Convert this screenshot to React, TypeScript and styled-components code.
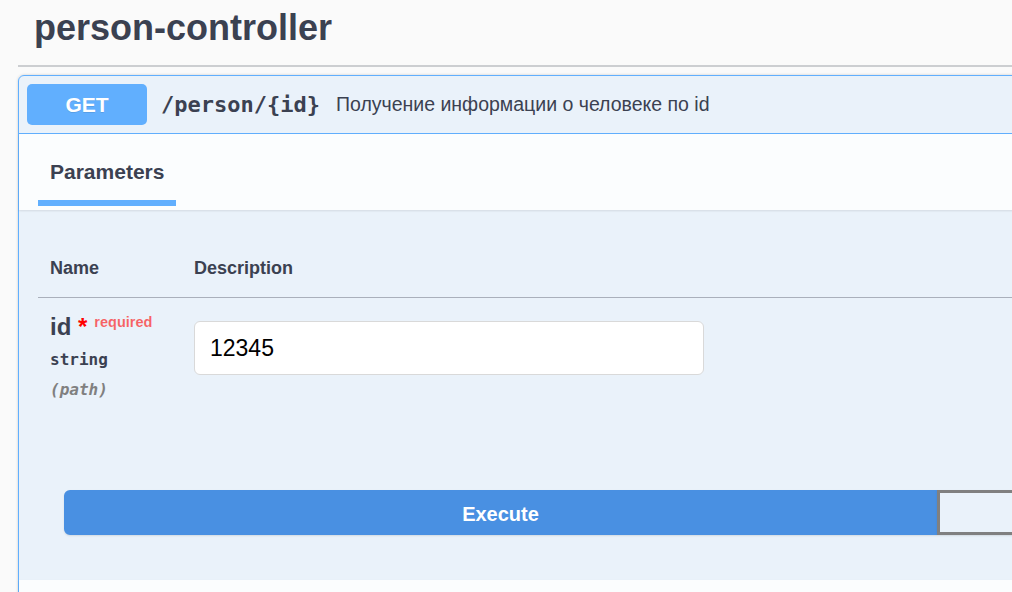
import React from "react";
import styled, { createGlobalStyle } from "styled-components";

const Global = createGlobalStyle`
  html, body { margin: 0; padding: 0; }
  body {
    background: #fafafa;
    font-family: "Liberation Sans", Arial, sans-serif;
    color: #3b4151;
    overflow: hidden;
    width: 1012px;
    height: 592px;
  }
`;

const Page = styled.div`
  padding-left: 18px;
  width: 1900px;
`;

const TagHeader = styled.h3`
  margin: 0;
  padding: 8px 0 0 16px;
  height: 57px;
  font-size: 36px;
  font-weight: bold;
  line-height: 40px;
  color: #3b4151;
  border-bottom: 2px solid rgba(59, 65, 81, 0.24);
`;

const Opblock = styled.div`
  margin-top: 8px;
  width: 1836px;
  border: 1px solid #61affe;
  border-radius: 6px;
  background: rgba(97, 175, 254, 0.1);
  box-shadow: 0 0 3px rgba(0, 0, 0, 0.19);
`;

const Summary = styled.div`
  display: flex;
  align-items: center;
  padding: 8px;
  border-bottom: 1px solid #61affe;
`;

const Method = styled.span`
  display: inline-flex;
  align-items: center;
  justify-content: center;
  width: 120px;
  height: 41px;
  border-radius: 5px;
  background: #61affe;
  color: #fff;
  font-size: 21px;
  font-weight: bold;
  text-shadow: 0 1px 0 rgba(0, 0, 0, 0.1);
`;

const Path = styled.span`
  padding: 0 16px 0 14px;
  font-family: "DejaVu Sans Mono", "Liberation Mono", monospace;
  font-size: 22px;
  font-weight: bold;
  color: #3b4151;
`;

const Description = styled.span`
  font-size: 19.5px;
  color: #3b4151;
`;

const SectionHeader = styled.div`
  display: flex;
  height: 76px;
  box-sizing: border-box;
  padding: 26px 19px 4px;
  background: rgba(255, 255, 255, 0.8);
  box-shadow: 0 1px 2px rgba(0, 0, 0, 0.1);
`;

const Tab = styled.div`
  display: flex;
  flex-direction: column;
  align-items: stretch;
  font-size: 21px;
  font-weight: bold;
  line-height: 24px;
  color: #3b4151;
  &::after {
    content: "";
    display: block;
    height: 6px;
    margin-top: 16px;
    background: #61affe;
  }
`;

const TabLabel = styled.span`
  padding: 0 12px;
`;

const TableContainer = styled.div`
  padding: 30px 0 30px 19px;
`;

const HeadRow = styled.div`
  display: grid;
  grid-template-columns: 156px 1fr;
  border-bottom: 1px solid #aab0bb;
`;

const HeadCell = styled.div`
  padding: 18px 12px;
  font-size: 18px;
  font-weight: bold;
  line-height: 21px;
  color: #3b4151;
  &:last-child { padding-left: 0; }
`;

const Row = styled.div`
  display: grid;
  grid-template-columns: 156px 1fr;
  padding-bottom: 15px;
`;

const NameCell = styled.div`
  padding: 15px 12px 0;
`;

const ParamName = styled.div`
  font-size: 24px;
  font-weight: bold;
  line-height: 28px;
  color: #3b4151;
  white-space: nowrap;
`;

const Star = styled.span`
  color: red;
`;

const Required = styled.span`
  position: relative;
  top: -8px;
  padding: 0 0 0 7px;
  font-size: 14.5px;
  font-weight: bold;
  color: rgba(255, 0, 0, 0.6);
`;

const ParamType = styled.div`
  margin-top: 6px;
  font-family: "DejaVu Sans Mono", "Liberation Mono", monospace;
  font-size: 16px;
  font-weight: bold;
  line-height: 20px;
  color: #3b4151;
`;

const ParamIn = styled.div`
  margin-top: 10px;
  font-family: "DejaVu Sans Mono", "Liberation Mono", monospace;
  font-size: 16px;
  font-weight: bold;
  font-style: italic;
  line-height: 20px;
  color: #808080;
`;

const DescCell = styled.div`
  padding-top: 23px;
`;

const Input = styled.input`
  box-sizing: border-box;
  width: 510px;
  height: 54px;
  padding: 0 15px;
  border: 1px solid #d9d9d9;
  border-radius: 6px;
  background: #fff;
  font-family: "Liberation Sans", Arial, sans-serif;
  font-size: 23px;
  color: #000;
  outline: none;
`;

const BtnGroup = styled.div`
  display: flex;
  padding: 45px;
`;

const Btn = styled.button<{ $primary?: boolean }>`
  flex: 1;
  height: 45px;
  border: 3px solid ${(p) => (p.$primary ? "#4990e2" : "#808080")};
  border-radius: ${(p) => (p.$primary ? "6px 0 0 6px" : "0 6px 6px 0")};
  background: ${(p) => (p.$primary ? "#4990e2" : "transparent")};
  color: ${(p) => (p.$primary ? "#fff" : "#3b4151")};
  font-family: "Liberation Sans", Arial, sans-serif;
  font-size: 20px;
  font-weight: bold;
  line-height: 41px;
  box-shadow: 0 1px 2px rgba(0, 0, 0, 0.1);
  padding: 1px 0 0;
`;

const ResponsesHeader = styled.div`
  height: 75px;
  background: rgba(255, 255, 255, 0.8);
  box-shadow: 0 1px 2px rgba(0, 0, 0, 0.1);
`;

export default function App() {
  return (
    <>
      <Global />
      <Page>
        <TagHeader>person-controller</TagHeader>
        <Opblock>
          <Summary>
            <Method>GET</Method>
            <Path>/person/&#123;id&#125;</Path>
            <Description>Получение информации о человеке по id</Description>
          </Summary>
          <SectionHeader>
            <Tab>
              <TabLabel>Parameters</TabLabel>
            </Tab>
          </SectionHeader>
          <TableContainer>
            <HeadRow>
              <HeadCell>Name</HeadCell>
              <HeadCell>Description</HeadCell>
            </HeadRow>
            <Row>
              <NameCell>
                <ParamName>
                  id<Star>&nbsp;*</Star>
                  <Required>required</Required>
                </ParamName>
                <ParamType>string</ParamType>
                <ParamIn>(path)</ParamIn>
              </NameCell>
              <DescCell>
                <Input defaultValue="12345" />
              </DescCell>
            </Row>
          </TableContainer>
          <BtnGroup>
            <Btn $primary>Execute</Btn>
            <Btn></Btn>
          </BtnGroup>
          <ResponsesHeader />
        </Opblock>
      </Page>
    </>
  );
}
